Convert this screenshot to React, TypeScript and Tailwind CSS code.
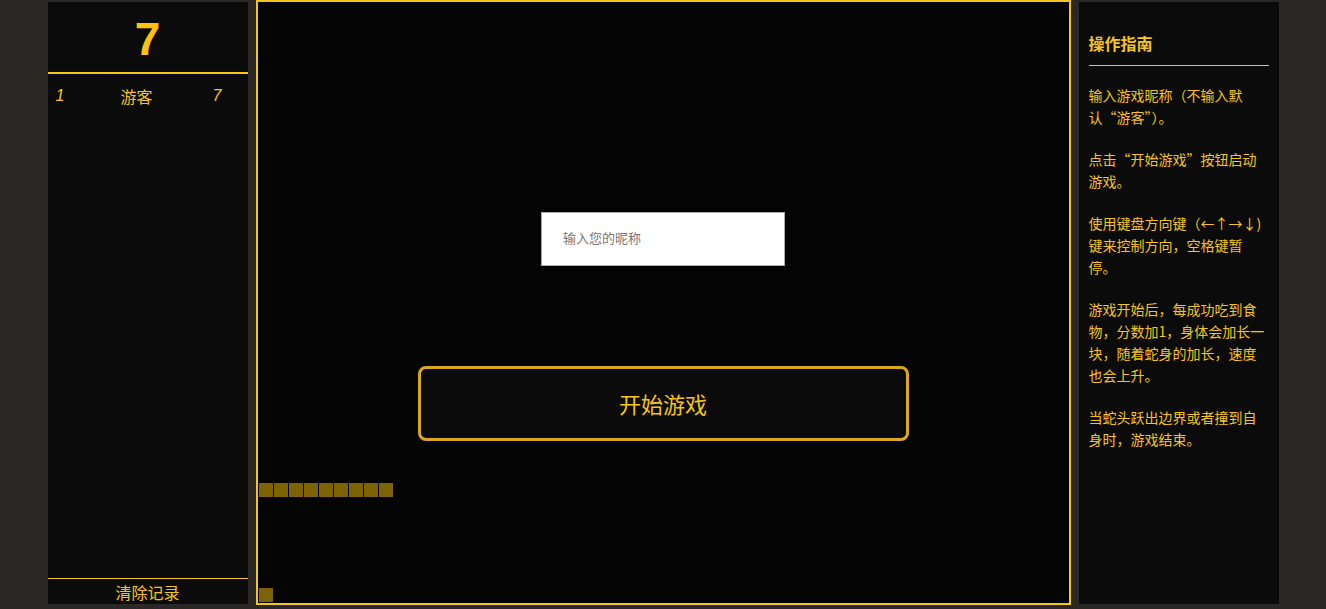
import { useState } from 'react';

const GOLD = 'text-[#f5c518]';

const guide = [
  ['输入游戏昵称（不输入默', '认“游客”）。'],
  ['点击“开始游戏”按钮启动', '游戏。'],
  ['使用键盘方向键（←↑→↓)', '键来控制方向，空格键暂', '停。'],
  ['游戏开始后，每成功吃到食', '物，分数加1，身体会加长一', '块，随着蛇身的加长，速度', '也会上升。'],
  ['当蛇头跃出边界或者撞到自', '身时，游戏结束。'],
];

const records = [{ rank: 1, name: '游客', score: 7 }];

export default function App() {
  const [name, setName] = useState('');
  const snake = Array.from({ length: 9 }, (_, i) => i);

  return (
    <div
      className="h-[609px] w-full bg-[#2a2727] flex justify-center overflow-hidden"
      style={{ fontFamily: '"Microsoft YaHei", "Noto Sans CJK SC", "Liberation Sans", sans-serif' }}
    >
      <div className="flex gap-2 h-[605px]">
        {/* Scoreboard */}
        <div className="w-[200px] mt-[2px] mb-px bg-[#0c0b0b] flex flex-col">
          <div className="h-[72px] shrink-0 flex items-center justify-center border-b-2 border-[#f5c518]">
            <span className="text-[#ffc30f] text-[46px] font-bold leading-none mt-[4px]" style={{ fontFamily: '"Liberation Sans", sans-serif' }}>
              7
            </span>
          </div>
          <div className="flex-1 pt-[10px]">
            {records.map((r) => (
              <div key={r.rank} className={`flex items-center pl-2 text-[16px] ${GOLD}`}>
                <span className="italic w-[65px]" style={{ fontFamily: '"Liberation Sans", sans-serif' }}>{r.rank}</span>
                <span className="w-[92px]">{r.name}</span>
                <span className="italic" style={{ fontFamily: '"Liberation Sans", sans-serif' }}>{r.score}</span>
              </div>
            ))}
          </div>
          <button className={`shrink-0 border-t border-[#f5c518] h-[26px] text-[16px] leading-[24px] ${GOLD}`}>
            清除记录
          </button>
        </div>

        {/* Board */}
        <div className="w-[815px] h-[605px] border-2 border-[#f5c518] bg-[#040404] flex flex-col">
          <div className="flex-1 flex flex-col items-center">
            <input
              value={name}
              onChange={(e) => setName(e.target.value)}
              placeholder="输入您的昵称"
              className="mt-[210px] w-[244px] h-[54px] bg-white border border-[#aaa] px-[21px] pb-[3px] text-[13px] text-[#333] placeholder:text-[#777] outline-none"
            />
            <button className="mt-[100px] w-[491px] h-[75px] border-[3px] border-[#d9a81c] rounded-[8px] bg-[#0b0b0b] text-[#f5c518] text-[22px]">
              开始游戏
            </button>
          </div>
          <div className="flex mb-[90px] ml-px">
            {snake.map((i) => (
              <div key={i} className="w-[15px] h-[15px] pr-px pt-px">
                <div className="w-full h-full bg-[#7d6304]" />
              </div>
            ))}
          </div>
          <div className="w-[15px] h-[15px] pr-px pt-px ml-px mb-px">
            <div className="w-full h-full bg-[#7d6304]" />
          </div>
        </div>

        {/* Guide */}
        <div className="w-[200px] mt-[2px] mb-px bg-[#0c0b0b] px-[10px] pt-[29px]">
          <h2 className={`text-[16px] font-bold pb-[10px] border-b border-[#f5c518] ${GOLD}`}>操作指南</h2>
          <div className="pt-[18px]">
            {guide.map((lines, i) => (
              <p key={i} className={`text-[14px] leading-[22px] mb-[20px] whitespace-nowrap ${GOLD}`}>
                {lines.map((l, j) => (
                  <span key={j} className="block">
                    {l}
                  </span>
                ))}
              </p>
            ))}
          </div>
        </div>
      </div>
    </div>
  );
}
